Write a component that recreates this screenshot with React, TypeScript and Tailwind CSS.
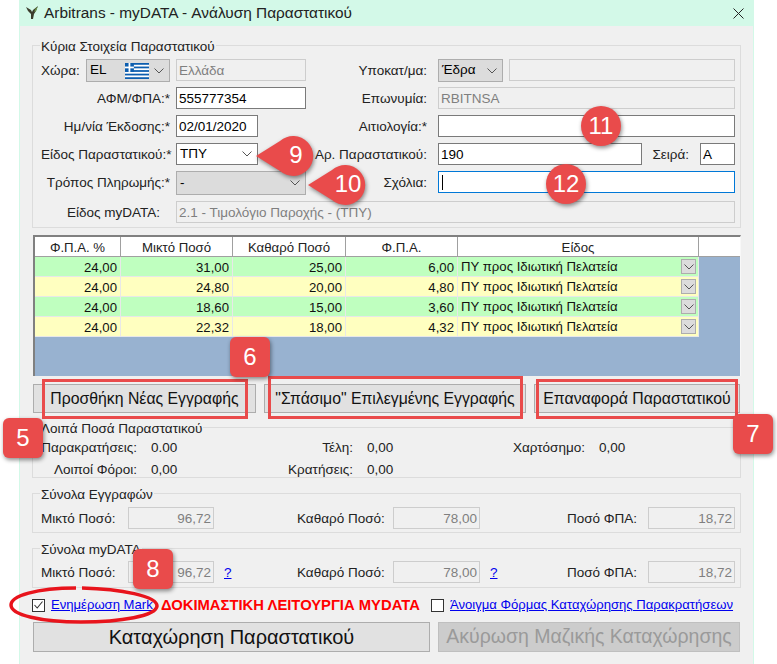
function Legend({ children }: { children: React.ReactNode }) {
  return (
    <div className="absolute left-[7px] top-[-7px] bg-[#f0f0f0] px-[1px] text-[#222] leading-[16px]">
      {children}
    </div>
  );
}

function Box({
  className,
  tone = "white",
  children,
}: {
  className: string;
  tone?: "white" | "off" | "focus";
  children?: React.ReactNode;
}) {
  const look =
    tone === "white"
      ? "bg-white border-[#7a7a7a] text-black"
      : tone === "focus"
        ? "bg-white border-[#0078d7] text-black"
        : "bg-[#f0f0f0] border-[#cdcdcd] text-[#7f7f7f]";
  return (
    <div className={`h-[22px] flex items-center border px-[2px] pt-[2px] leading-none shrink-0 ${look} ${className}`}>
      {children}
    </div>
  );
}

function Chevron() {
  return (
    <svg width="10" height="6" viewBox="0 0 10 6" fill="none">
      <path d="M0.5 0.5 L5 5 L9.5 0.5" stroke="#555" strokeWidth="1" />
    </svg>
  );
}

function Select({
  className,
  off,
  children,
}: {
  className: string;
  off?: boolean;
  children: React.ReactNode;
}) {
  return (
    <div
      className={`flex items-center border pl-[3px] pr-[5px] shrink-0 ${
        off ? "bg-[#dcdcdc] border-[#adadad]" : "bg-white border-[#7a7a7a]"
      } ${className}`}
    >
      <span className="flex-1 flex items-center justify-between pr-[8px] text-black">{children}</span>
      <Chevron />
    </div>
  );
}

function GreekFlag() {
  return (
    <svg width="24" height="16" viewBox="0 0 27 18" className="mr-[-3px]">
      <rect width="27" height="18" fill="#0d5eaf" />
      {[2, 6, 10, 14].map((y) => (
        <rect key={y} y={y} width="27" height="2" fill="#fff" />
      ))}
      <rect width="10" height="10" fill="#0d5eaf" />
      <rect x="4" width="2" height="10" fill="#fff" />
      <rect y="4" width="10" height="2" fill="#fff" />
    </svg>
  );
}

function Label({ className, children }: { className: string; children: React.ReactNode }) {
  return <div className={`text-right shrink-0 text-[#222] whitespace-nowrap leading-[20px] pt-[2px] ${className}`}>{children}</div>;
}

function Row({ className = "", children }: { className?: string; children: React.ReactNode }) {
  return <div className={`flex items-start ${className}`}>{children}</div>;
}

const rows = [
  { vat: "24,00", gross: "31,00", net: "25,00", tax: "6,00", bg: "bg-[#bfffbf]" },
  { vat: "24,00", gross: "24,80", net: "20,00", tax: "4,80", bg: "bg-[#ffffc0]" },
  { vat: "24,00", gross: "18,60", net: "15,00", tax: "3,60", bg: "bg-[#bfffbf]" },
  { vat: "24,00", gross: "22,32", net: "18,00", tax: "4,32", bg: "bg-[#ffffc0]" },
];

function Grid() {
  const head = "border-r border-[#a0a0a0] text-center text-[#222]";
  const cell = "border-r border-b border-[#e8e8e8] text-right pr-[3px] text-[#111]";
  return (
    <div className="h-[141px] ml-[13px] mr-[12px] mt-[7px] bg-[#98b2d0] border-t-2 border-l-2 border-[#808080] border-r border-r-[#f8f8f8] text-[13.2px]">
      <div className="flex h-[20px] leading-[21px] bg-white border-b border-[#a0a0a0]">
        <div className={`w-[86px] ${head}`}>Φ.Π.Α. %</div>
        <div className={`w-[112px] ${head}`}>Μικτό Ποσό</div>
        <div className={`w-[113px] ${head}`}>Καθαρό Ποσό</div>
        <div className={`w-[112px] ${head}`}>Φ.Π.Α.</div>
        <div className={`w-[241px] ${head}`}>Είδος</div>
        <div className="flex-1" />
      </div>
      {rows.map((r, i) => (
        <div key={i} className="flex h-[20px] leading-[21px]">
          <div className={`w-[86px] ${r.bg} ${cell}`}>{r.vat}</div>
          <div className={`w-[112px] ${r.bg} ${cell}`}>{r.gross}</div>
          <div className={`w-[113px] ${r.bg} ${cell}`}>{r.net}</div>
          <div className={`w-[112px] ${r.bg} ${cell}`}>{r.tax}</div>
          <div className={`w-[241px] ${r.bg} border-r border-b border-[#e8e8e8] pl-[3px] flex items-center justify-between pr-[2px] text-[#111]`}>
            <span>ΠΥ προς Ιδιωτική Πελατεία</span>
            <span className="w-[15px] h-[15px] bg-[#dcdcdc] border border-[#adadad] flex items-center justify-center">
              <Chevron />
            </span>
          </div>
        </div>
      ))}
    </div>
  );
}

function Btn({ className, children }: { className: string; children: React.ReactNode }) {
  return (
    <div
      className={`h-[29px] bg-[#e1e1e1] border border-[#adadad] flex items-center justify-center text-[15.8px] text-[#111] whitespace-nowrap shrink-0 ${className}`}
    >
      {children}
    </div>
  );
}

function Totals({ help }: { help?: boolean }) {
  const q = <span className="text-[#0000ee] underline">?</span>;
  return (
    <div className="flex items-center h-[22px] pl-[8px]">
      <span className="w-[87px] pt-[2px] text-[#222]">Μικτό Ποσό:</span>
      <Box className="w-[86px] justify-end" tone="off">96,72</Box>
      <span className="w-[83px] pl-[10px] pt-[2px]">{help && q}</span>
      <span className="w-[96px] pt-[2px] text-[#222]">Καθαρό Ποσό:</span>
      <Box className="w-[87px] justify-end" tone="off">78,00</Box>
      <span className="w-[87px] pl-[10px] pt-[2px]">{help && q}</span>
      <span className="w-[81px] pt-[2px] text-[#222]">Ποσό ΦΠΑ:</span>
      <Box className="w-[87px] justify-end" tone="off">18,72</Box>
    </div>
  );
}

function Badge({ n, className }: { n: number; className: string }) {
  return (
    <div
      className={`absolute w-[40px] h-[40px] bg-[#e94b4b] flex items-center justify-center text-white text-[24px] shadow-[1px_2px_4px_rgba(0,0,0,0.45)] ${className}`}
    >
      {n}
    </div>
  );
}

function Callout({ n, className }: { n: number; className: string }) {
  return (
    <div className={`absolute w-[60px] h-[40px] ${className}`}>
      <svg width="60" height="42" viewBox="0 0 60 42" className="absolute left-0 top-0 drop-shadow-[1px_2px_2px_rgba(0,0,0,0.45)]">
        <path d="M0 21 L24 6 A20 20 0 1 1 24 36 Z" fill="#e94b4b" />
      </svg>
      <span className="absolute left-[20px] w-[40px] h-[40px] flex items-center justify-center text-white text-[24px]">
        {n}
      </span>
    </div>
  );
}

export default function App() {
  return (
    <div className="relative w-[777px] h-[664px] overflow-hidden bg-white text-[13.5px] font-[Liberation_Sans] text-[#111]">
      <div className="ml-[19px] w-[735px] h-[664px] bg-[#f0f0f0] border-x border-[#d3f9e8]">
        {/* title bar */}
        <div className="h-[26px] bg-[#d3f9e8] flex items-center pl-[6px] pr-[9px] text-[15.4px] text-[#222]">
          <svg width="13" height="14" viewBox="0 0 13 14" className="mr-[5px]">
            <path d="M0 1 L5 4 L6 6 L7 4 L12 0 L10 5 L8 8 L7 13 L5 13 L5 8 L2 5 Z" fill="#3c3c2c" />
            <path d="M10 2 L11.5 1 L10 5 L8 6 Z" fill="#6f9a4a" />
          </svg>
          <span className="flex-1">Arbitrans - myDATA - Ανάλυση Παραστατικού</span>
          <svg width="11" height="11" viewBox="0 0 11 11">
            <path d="M0.5 0.5 L10.5 10.5 M10.5 0.5 L0.5 10.5" stroke="#222" strokeWidth="1" />
          </svg>
        </div>

        {/* main details */}
        <div className="relative h-[183px] mx-[12px] mt-[19px] border border-[#dcdcdc] pt-[13px] pl-[8px] pr-[5px]">
          <Legend>Κύρια Στοιχεία Παραστατικού</Legend>
          <Row>
            <span className="w-[45px] shrink-0 leading-[20px] pt-[2px] text-[#222]">Χώρα:</span>
            <Select className="w-[84px] h-[23px]" off>
              <span>EL</span>
              <GreekFlag />
            </Select>
            <span className="w-[6px] shrink-0" />
            <Box className="w-[130px]" tone="off">Ελλάδα</Box>
            <Label className="w-[121px]">Υποκατ/μα:</Label>
            <span className="w-[11px] shrink-0" />
            <Select className="w-[65px] h-[23px]" off>Έδρα</Select>
            <span className="w-[6px] shrink-0" />
            <Box className="w-[226px]" tone="off" />
          </Row>
          <Row className="mt-[5px]">
            <Label className="w-[129px]">ΑΦΜ/ΦΠΑ:*</Label>
            <span className="w-[6px] shrink-0" />
            <Box className="w-[130px]">555777354</Box>
            <Label className="w-[121px]">Επωνυμία:</Label>
            <span className="w-[11px] shrink-0" />
            <Box className="w-[297px]" tone="off">RBITNSA</Box>
          </Row>
          <Row className="mt-[6px]">
            <Label className="w-[129px]">Ημ/νία Έκδοσης:*</Label>
            <span className="w-[6px] shrink-0" />
            <Box className="w-[82px]">02/01/2020</Box>
            <Label className="w-[169px]">Αιτιολογία:*</Label>
            <span className="w-[11px] shrink-0" />
            <Box className="w-[297px]" />
          </Row>
          <Row className="mt-[6px]">
            <Label className="w-[129px]">Είδος Παραστατικού:*</Label>
            <span className="w-[6px] shrink-0" />
            <Select className="w-[82px] h-[22px]">ΤΠΥ</Select>
            <Label className="w-[169px]">Αρ. Παραστατικού:</Label>
            <span className="w-[11px] shrink-0" />
            <Box className="w-[204px]">190</Box>
            <span className="w-[58px] shrink-0 text-right pr-[11px] leading-[20px] pt-[2px] text-[#222]">Σειρά:</span>
            <Box className="w-[35px]">Α</Box>
          </Row>
          <Row className="mt-[6px]">
            <Label className="w-[129px]">Τρόπος Πληρωμής:*</Label>
            <span className="w-[6px] shrink-0" />
            <Select className="w-[130px] h-[24px]" off>-</Select>
            <Label className="w-[121px]">Σχόλια:</Label>
            <span className="w-[11px] shrink-0" />
            <Box className="w-[297px]" tone="focus">
              <span className="w-px h-[15px] mb-[2px] bg-black ml-px" />
            </Box>
          </Row>
          <Row className="mt-[6px]">
            <Label className="w-[119px]">Είδος myDATA:</Label>
            <span className="w-[16px] shrink-0" />
            <Box className="w-[559px]" tone="off">2.1 - Τιμολόγιο Παροχής - (ΤΠΥ)</Box>
          </Row>
        </div>

        <Grid />

        {/* action buttons */}
        <div className="flex ml-[13px] mt-[8px]">
          <Btn className="w-[223px]">Προσθήκη Νέας Εγγραφής</Btn>
          <span className="w-[8px]" />
          <Btn className="w-[262px]">"Σπάσιμο" Επιλεγμένης Εγγραφής</Btn>
          <span className="w-[8px]" />
          <Btn className="w-[206px]">Επαναφορά Παραστατικού</Btn>
        </div>

        {/* other amounts */}
        <div className="relative h-[51px] mx-[12px] mt-[14px] border border-[#dcdcdc] pt-[9px] text-[#222]">
          <Legend>Λοιπά Ποσά Παραστατικού</Legend>
          <div className="flex h-[22px] leading-[22px]">
            <span className="w-[104px] text-right">Παρακρατήσεις:</span>
            <span className="w-[150px] pl-[14px]">0.00</span>
            <span className="w-[66px] text-right">Τέλη:</span>
            <span className="w-[147px] pl-[14px]">0,00</span>
            <span className="w-[85px] text-right">Χαρτόσημο:</span>
            <span className="pl-[14px]">0,00</span>
          </div>
          <div className="flex h-[22px] leading-[22px]">
            <span className="w-[104px] text-right">Λοιποί Φόροι:</span>
            <span className="w-[150px] pl-[14px]">0,00</span>
            <span className="w-[66px] text-right">Κρατήσεις:</span>
            <span className="pl-[14px]">0,00</span>
          </div>
        </div>

        <div className="relative h-[40px] mx-[12px] mt-[15px] border border-[#dcdcdc] pt-[13px]">
          <Legend>Σύνολα Εγγραφών</Legend>
          <Totals />
        </div>

        <div className="relative h-[40px] mx-[12px] mt-[15px] border border-[#dcdcdc] pt-[12px]">
          <Legend>Σύνολα myDATA</Legend>
          <Totals help />
        </div>

        {/* options */}
        <div className="flex items-center h-[22px] ml-[12px] mt-[6px] text-[13.1px]">
          <span className="w-[13px] h-[13px] border border-[#333] bg-white flex items-center justify-center shrink-0">
            <svg width="9" height="8" viewBox="0 0 9 8" fill="none">
              <path d="M0.5 4 L3.2 7 L8.5 0.5" stroke="#333" strokeWidth="1.1" />
            </svg>
          </span>
          <span className="ml-[6px] w-[110px] text-[#0000ee] underline whitespace-nowrap">Ενημέρωση Mark</span>
          <span className="w-[270px] text-[14.8px] text-[#ff0000] font-bold whitespace-nowrap">ΔΟΚΙΜΑΣΤΙΚΗ ΛΕΙΤΟΥΡΓΙΑ MYDATA</span>
          <span className="w-[13px] h-[13px] border border-[#333] bg-white shrink-0" />
          <span className="ml-[6px] text-[#0000ee] underline whitespace-nowrap">Άνοιγμα Φόρμας Καταχώρησης Παρακρατήσεων</span>
        </div>

        {/* bottom buttons */}
        <div className="flex ml-[13px] mt-[6px]">
          <div className="w-[397px] h-[30px] bg-[#e1e1e1] border border-[#adadad] flex items-center justify-center text-[20px] text-[#111]">
            Καταχώρηση Παραστατικού
          </div>
          <span className="w-[8px]" />
          <div className="w-[302px] h-[30px] bg-[#cccccc] border border-[#bfbfbf] flex items-center justify-center text-[19.5px] text-[#9a9a9a]">
            Ακύρωση Μαζικής Καταχώρησης
          </div>
        </div>
      </div>

      {/* annotations drawn over the screenshot */}
      <div className="absolute left-[42px] top-[379px] w-[206px] h-[40px] border-[3px] border-[#e94b4b]" />
      <div className="absolute left-[268px] top-[376px] w-[255px] h-[43px] border-[3px] border-[#e94b4b]" />
      <div className="absolute left-[536px] top-[379px] w-[202px] h-[40px] border-[3px] border-[#e94b4b]" />
      <svg width="160" height="44" viewBox="0 0 160 44" fill="none" className="absolute left-[6px] top-[584px]">
        <path d="M70 4 C30 4 5 12 5 21 C5 31 35 38 75 38 C115 38 150 32 151 22 C151 12 115 5 76 4" stroke="#e8141c" strokeWidth="3.5" />
      </svg>
      <Badge n={5} className="left-[3px] top-[418px] rounded-[6px]" />
      <Badge n={6} className="left-[230px] top-[337px] rounded-[6px]" />
      <Badge n={7} className="left-[733px] top-[414px] rounded-[6px]" />
      <Badge n={8} className="left-[133px] top-[549px] rounded-[6px]" />
      <Callout n={9} className="left-[256px] top-[135px]" />
      <Callout n={10} className="left-[308px] top-[164px]" />
      <Badge n={11} className="left-[581px] top-[106px] rounded-full" />
      <Badge n={12} className="left-[546px] top-[164px] rounded-full" />
    </div>
  );
}
